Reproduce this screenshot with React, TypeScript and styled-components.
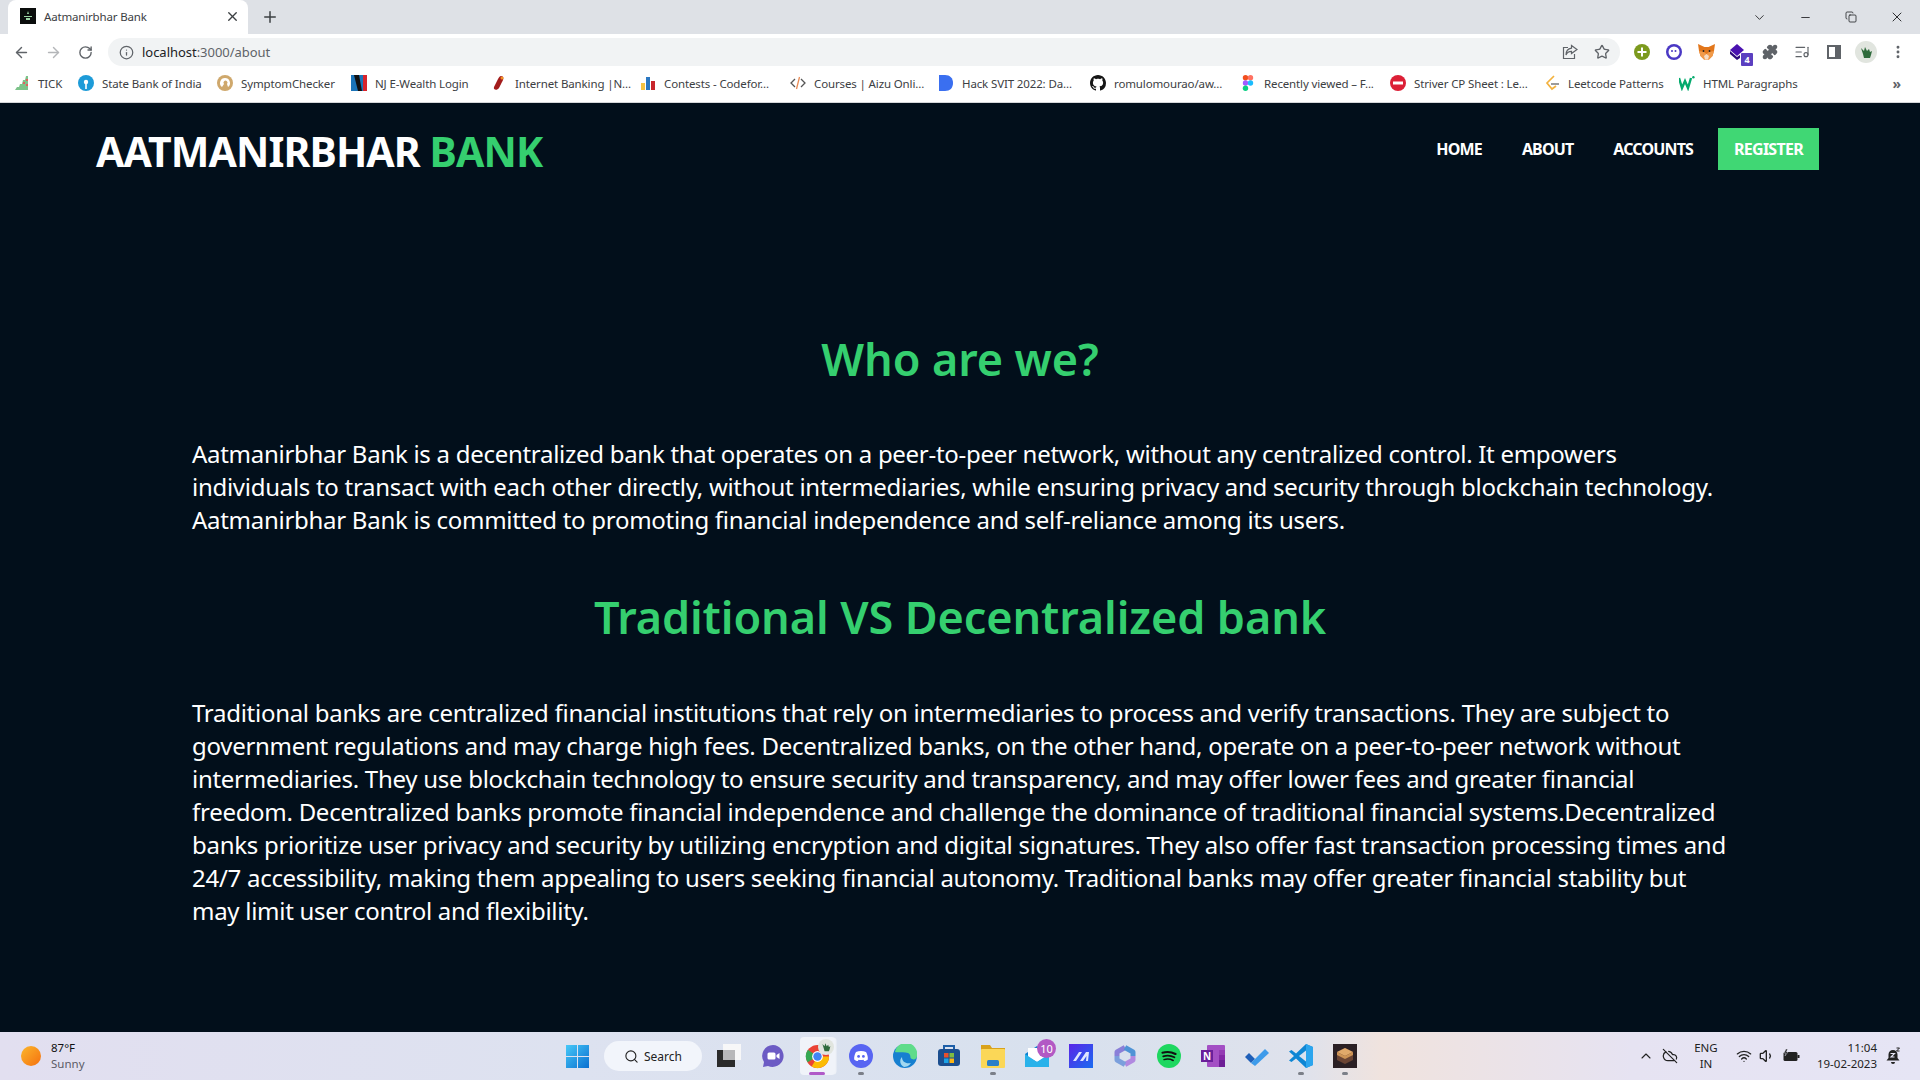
import React from 'react';
import styled, { createGlobalStyle } from 'styled-components';
import { ArrowLeft, ArrowRight, RotateCw, Info, Star, X, Plus, ChevronDown, Minus, Copy, Puzzle, ListMusic, MoreVertical, Search as SearchIcon, ChevronUp, CloudOff, Wifi, Volume1 } from 'lucide-react';

const Global = createGlobalStyle`
  html, body { margin: 0; padding: 0; width: 1920px; height: 1080px; overflow: hidden; background: #020f1b; }
  * { box-sizing: border-box; }
  #root { width: 1920px; height: 1080px; }
`;
const UI = `"Noto Sans", "Open Sans", sans-serif`;

const Screen = styled.div`display:flex;flex-direction:column;width:1920px;height:1080px;font-family:${UI};`;
const TabStrip = styled.div`display:flex;align-items:flex-end;height:34px;background:#dee1e6;padding-left:8px;flex:none;`;
const Tab = styled.div`display:flex;align-items:center;width:240px;height:34px;background:#fff;border-radius:8px 8px 0 0;padding:0 8px 2px 12px;gap:8px;`;
const Favicon = styled.span`display:flex;align-items:center;justify-content:center;width:16px;height:16px;background:#0a0d0c;flex:none;`;
const TabTitle = styled.span`flex:1;font-size:11.5px;color:#3c4043;letter-spacing:-0.17px;white-space:nowrap;`;
const NewTab = styled.span`display:flex;margin-left:13px;align-self:center;color:#3c4043;`;
const WindowControls = styled.div`display:flex;align-items:center;margin-left:auto;align-self:stretch;color:#202124;`;
const WinBtn = styled.span`display:flex;align-items:center;justify-content:center;width:46px;height:28px;`;

const Toolbar = styled.div`display:flex;align-items:center;height:32px;background:#fff;flex:none;padding:4px 5px 0 5px;`;
const NavBtn = styled.span<{ $dim?: boolean }>`display:flex;align-items:center;justify-content:center;width:32px;height:28px;color:${p => (p.$dim ? '#b4b6b9' : '#5f6368')};`;
const Omnibox = styled.div`display:flex;align-items:center;height:28px;width:1512px;margin-left:7px;background:#f1f3f4;border-radius:14px;padding:0 10px 0 11px;`;
const OmniText = styled.span`margin-left:8px;font-size:13px;color:#202124;letter-spacing:-0.03px;`;
const OmniDim = styled.span`color:#5f6368;`;
const OmniEnd = styled.span`display:flex;gap:16px;margin-left:auto;color:#5f6368;`;
const Ext = styled.span`position:relative;display:flex;align-items:center;justify-content:center;width:32px;height:28px;color:#5f6368;`;
const ExtGroup = styled.div`display:flex;margin-left:6px;`;
const Badge = styled.span`position:absolute;right:1px;bottom:0;width:12px;height:13px;background:#5b3fc0;color:#fff;font-size:9px;font-weight:700;line-height:13px;text-align:center;border-radius:1px;`;

const Bookmarks = styled.div`display:flex;align-items:center;height:37px;background:#fff;border-bottom:1px solid #d5d7da;flex:none;padding:0 0 2px 14px;gap:16px;`;
const Bookmark = styled.div<{ $w: number }>`display:flex;align-items:center;gap:8px;width:${p => p.$w}px;flex:none;`;
const BookIcon = styled.span`display:flex;width:16px;height:16px;flex:none;`;
const BookText = styled.span`font-size:11.5px;letter-spacing:-0.13px;color:#3c4043;white-space:nowrap;`;
const More = styled.span`margin-left:auto;margin-right:19px;font-size:14px;font-weight:700;color:#5f6368;`;

const Page = styled.main`flex:1;background:#020f1b;color:#fff;display:flex;flex-direction:column;min-height:0;`;
const Header = styled.header`display:flex;align-items:flex-start;justify-content:space-between;padding:25px 101px 0 96px;`;
const Logo = styled.div`font-size:41px;font-weight:700;line-height:46px;color:#fff;letter-spacing:-0.9px;`;
const LogoAccent = styled.span`color:#35cf6f;`;
const Menu = styled.nav`display:flex;align-items:center;gap:40px;height:42px;`;
const MenuLink = styled.a`font-size:16px;font-weight:700;color:#fff;letter-spacing:-0.85px;`;
const RegisterBtn = styled.a`display:flex;align-items:center;justify-content:center;width:101px;height:42px;margin-left:-15px;background:#40d774;color:#fff;font-size:16px;font-weight:700;letter-spacing:-0.75px;`;
const Content = styled.section`display:flex;flex-direction:column;padding:0 192px;`;
const Heading = styled.h1<{ $top: number }>`margin:${p => p.$top}px 0 0;text-align:center;font-size:45px;line-height:60px;font-weight:600;color:#35cf6f;letter-spacing:-0.1px;`;
const Para = styled.p<{ $top: number }>`margin:${p => p.$top}px 0 0;font-size:24px;line-height:33px;color:#fff;letter-spacing:-0.28px;white-space:nowrap;`;

const Taskbar = styled.footer`display:grid;grid-template-columns:555px 1fr auto;align-items:center;height:48px;flex:none;background:linear-gradient(90deg,#e2dff0 0%,#dde2f0 30%,#d8e1ee 55%,#dfe2ec 68%,#f0e3de 72%,#e6e3f2 85%,#e6e5f5 100%);`;
const Weather = styled.div`display:flex;align-items:center;gap:10px;padding-left:21px;`;
const Sun = styled.span`width:20px;height:20px;border-radius:50%;background:linear-gradient(135deg,#fbb72c,#f5700f);`;
const WeatherText = styled.div`display:flex;flex-direction:column;font-size:11.5px;line-height:16px;color:#111;`;
const WeatherSub = styled.span`color:#5b5b66;`;
const Apps = styled.div`display:flex;align-items:center;`;
const AppSlot = styled.span<{ $active?: boolean }>`position:relative;display:flex;align-items:center;justify-content:center;width:44px;height:44px;flex:none;
  ${p => p.$active ? `&::before{content:"";position:absolute;left:5px;top:3px;width:35px;height:38px;background:#f0f3f9;border-radius:4px;box-shadow:2px 0 0 -0.5px #eef1f7;}
  & > svg{position:relative;}` : ''}`;
const RunDot = styled.span<{ $active?: boolean }>`position:absolute;bottom:3px;left:50%;transform:translateX(-50%);height:3px;border-radius:2px;width:${p => (p.$active ? 16 : 6)}px;background:${p => (p.$active ? '#b05ac8' : '#7b7f88')};`;
const SearchBox = styled.div`display:flex;align-items:center;justify-content:center;gap:5px;width:98px;height:30px;margin:0 5px;border-radius:15px;background:#f2f5fb;font-size:12px;color:#222;`;
const MailCount = styled.span`position:absolute;right:3px;top:5px;width:19px;height:19px;border-radius:50%;background:#b259c4;color:#fff;font-size:11px;line-height:19px;text-align:center;`;
const Tray = styled.div`display:flex;align-items:center;color:#222;padding-right:19px;`;
const TrayCloud = styled.span`display:flex;margin-left:8px;`;
const TrayLang = styled.div`display:flex;flex-direction:column;align-items:center;width:44px;margin:0 8px 0 6px;font-size:11.5px;line-height:16px;`;
const TrayIcons = styled.div`display:flex;align-items:center;gap:7px;`;
const Clock = styled.div`display:flex;flex-direction:column;align-items:flex-end;margin:0 8px 0 17px;font-size:11.5px;line-height:16px;`;

const bookmarks: { w: number; label: string; icon: React.ReactNode }[] = [
  { w: 48, label: 'TICK', icon: <svg viewBox="0 0 16 16"><path d="M1 15l2-3h2l1-3h2l1-4h2l1-4h2v14z" fill="#7dc38a" /><path d="M9 7h2v2H9zM12 4h2v2h-2zM12 9h2v2h-2z" fill="#e0605f" /></svg> },
  { w: 123, label: 'State Bank of India', icon: <svg viewBox="0 0 16 16"><circle cx="8" cy="8" r="8" fill="#1d9bd8" /><circle cx="8" cy="7" r="2.2" fill="#fff" /><rect x="7.2" y="8" width="1.6" height="6" fill="#fff" /></svg> },
  { w: 118, label: 'SymptomChecker', icon: <svg viewBox="0 0 16 16"><circle cx="8" cy="8" r="8" fill="#cfa86c" /><path d="M8 3a5 5 0 0 0-3 9l2-3a2 2 0 1 1 3 0l1 3a5 5 0 0 0-3-9z" fill="#fff" /></svg> },
  { w: 124, label: 'NJ E-Wealth Login', icon: <svg viewBox="0 0 16 16"><rect width="16" height="16" fill="#1b74b8" /><path d="M3 0h5l3 16H7z" fill="#111" /><rect x="12" y="0" width="4" height="16" fill="#d8242c" /></svg> },
  { w: 133, label: 'Internet Banking |N...', icon: <svg viewBox="0 0 16 16"><path d="M10 1c3 0 3 3 1 6l-3 6c-2 3-6 2-5-1l4-8c1-2 2-3 3-3z" fill="#a31c1c" /><circle cx="11" cy="3" r="1.5" fill="#f29222" /></svg> },
  { w: 134, label: 'Contests - Codefor...', icon: <svg viewBox="0 0 16 16"><rect x="1" y="8" width="4" height="7" fill="#f6c342" /><rect x="6" y="2" width="4" height="13" fill="#2b78c2" /><rect x="11" y="6" width="4" height="9" fill="#c8262c" /></svg> },
  { w: 132, label: 'Courses | Aizu Onli...', icon: <svg viewBox="0 0 16 16" fill="none" strokeWidth="1.3"><path d="M5 4L1 8l4 4" stroke="#555" /><path d="M11 4l4 4-4 4" stroke="#555" /><path d="M9.5 2L6.5 14" stroke="#e98a54" /></svg> },
  { w: 136, label: 'Hack SVIT 2022: Da...', icon: <svg viewBox="0 0 16 16"><path d="M1 0h6c5 0 8 3 8 8s-3 8-8 8H1z" fill="#3a6ff0" /></svg> },
  { w: 134, label: 'romulomourao/aw...', icon: <svg viewBox="0 0 16 16"><path fill="#161616" d="M8 0C3.58 0 0 3.58 0 8c0 3.54 2.29 6.53 5.47 7.59.4.07.55-.17.55-.38 0-.19-.01-.82-.01-1.49-2.01.37-2.53-.49-2.69-.94-.09-.23-.48-.94-.82-1.13-.28-.15-.68-.52-.01-.53.63-.01 1.08.58 1.23.82.72 1.21 1.87.87 2.33.66.07-.52.28-.87.51-1.07-1.78-.2-3.64-.89-3.64-3.95 0-.87.31-1.59.82-2.15-.08-.2-.36-1.02.08-2.12 0 0 .67-.21 2.2.82.64-.18 1.32-.27 2-.27s1.36.09 2 .27c1.53-1.04 2.2-.82 2.2-.82.44 1.1.16 1.92.08 2.12.51.56.82 1.27.82 2.15 0 3.07-1.87 3.75-3.65 3.95.29.25.54.73.54 1.48 0 1.07-.01 1.93-.01 2.2 0 .21.15.46.55.38A8.01 8.01 0 0 0 16 8c0-4.42-3.58-8-8-8z" /></svg> },
  { w: 134, label: 'Recently viewed – F...', icon: <svg viewBox="0 0 16 16"><circle cx="5.5" cy="2.7" r="2.7" fill="#f24e1e" /><circle cx="10.5" cy="2.7" r="2.7" fill="#ff7262" /><circle cx="5.5" cy="8" r="2.7" fill="#a259ff" /><circle cx="10.5" cy="8" r="2.7" fill="#1abcfe" /><circle cx="5.5" cy="13.3" r="2.7" fill="#0acf83" /></svg> },
  { w: 138, label: 'Striver CP Sheet : Le...', icon: <svg viewBox="0 0 16 16"><circle cx="8" cy="8" r="8" fill="#dc1f36" /><rect x="3" y="6.5" width="10" height="3" fill="#fff" /></svg> },
  { w: 119, label: 'Leetcode Patterns', icon: <svg viewBox="0 0 16 16" fill="none" strokeWidth="1.7"><path d="M10 1L3 8l5 6 4-3" stroke="#f3b23f" /><path d="M7 9h8" stroke="#8a8a8a" /></svg> },
  { w: 117, label: 'HTML Paragraphs', icon: <svg viewBox="0 0 16 16" fill="none"><path d="M0 3l3 10 3-7 3 7 3-10" stroke="#04aa6d" strokeWidth="2.4" /><circle cx="14.4" cy="2.2" r="1.2" fill="#04aa6d" /></svg> },
];

const Windows = () => <svg width="23" height="23" viewBox="0 0 23 23"><defs><linearGradient id="w" x1="0" y1="0" x2="1" y2="1"><stop offset="0" stopColor="#46c8f8" /><stop offset="1" stopColor="#0a6fd0" /></linearGradient></defs><path fill="url(#w)" d="M0 0h11v11H0zM12 0h11v11H12zM0 12h11v11H0zM12 12h11v11H12z" /></svg>;
const TaskView = () => <svg width="24" height="24" viewBox="0 0 24 24"><rect x="6" y="0" width="18" height="16" fill="#f7f7f8" /><rect x="0" y="6" width="18" height="17" fill="#2b2b2b" /><rect x="6" y="6" width="12" height="10" fill="#b8b8ba" /></svg>;
const TeamsChat = () => <svg width="24" height="24" viewBox="0 0 24 24"><path d="M12 1a11 11 0 1 1-5 21l-5 1 1-5A11 11 0 0 1 12 1z" fill="#6c5bc4" /><rect x="6.5" y="8.5" width="8" height="7" rx="1.5" fill="#fff" /><path d="M15.5 11l3-2v6l-3-2z" fill="#fff" /></svg>;
const Chrome = () => <svg width="25" height="25" viewBox="0 0 26 26"><circle cx="13" cy="13" r="12" fill="#ea4335" /><path d="M13 13L2.6 19A12 12 0 0 1 3 6z" fill="#34a853" /><path d="M13 13h12a12 12 0 0 1-18 10.4z" fill="#fbbc04" /><circle cx="13" cy="13" r="5.6" fill="#fff" /><circle cx="13" cy="13" r="4.4" fill="#4285f4" /></svg>;
const Discord = () => <svg width="24" height="24" viewBox="0 0 24 24"><circle cx="12" cy="12" r="12" fill="#5865f2" /><path d="M7 8c3-1.400 7-1.400 10 0 1.400 2.400 2 5 1.800 7.400-1.400 1-2.600 1.500-3.600 1.700l-.8-1.300c-1.600.4-3.200.4-4.800 0l-.8 1.300c-1-.2-2.200-.7-3.600-1.700C5 13 5.600 10.400 7 8z" fill="#fff" /><circle cx="9.600" cy="12.400" r="1.400" fill="#5865f2" /><circle cx="14.400" cy="12.400" r="1.400" fill="#5865f2" /></svg>;
const Edge = () => <svg width="24" height="24" viewBox="0 0 24 24"><circle cx="12" cy="12" r="12" fill="#1780d0" /><path d="M2 8a11 11 0 0 1 22 4c0 3-3 4-5 3-3-1 0-4-4-6-4-1.600-10 0-13-1z" fill="#5fdc8a" /><path d="M9 13c0 5 4 7 9 6-2 3-5 4-7 4-4-2-5-7-2-10z" fill="#c5eef7" opacity=".8" /></svg>;
const Store = () => <svg width="24" height="24" viewBox="0 0 24 24"><path d="M7 5V2h10v3" fill="none" stroke="#1c5ea8" strokeWidth="2" /><rect x="1" y="5" width="22" height="17" rx="3" fill="#1b4e8f" /><rect x="7" y="9" width="4.500" height="4.500" fill="#e8502e" /><rect x="12.500" y="9" width="4.500" height="4.500" fill="#7fbb42" /><rect x="7" y="14.500" width="4.500" height="4.500" fill="#1ba2e6" /><rect x="12.500" y="14.500" width="4.500" height="4.500" fill="#fcb415" /></svg>;
const Folder = () => <svg width="24" height="24" viewBox="0 0 24 24"><path d="M0 1h9l2 3h13v4H0z" fill="#d9a21b" /><rect y="5" width="24" height="19" rx="1" fill="#fbd757" /><rect x="6" y="16" width="12" height="6" rx="1.500" fill="#2a7fc9" /></svg>;
const Mail = () => <svg width="24" height="24" viewBox="0 0 24 24"><path d="M0 10L12 2l12 8v12H0z" fill="#0f7fcf" /><path d="M3 4h18v9l-9 5-9-5z" fill="#fff" /><path d="M0 10l12 8 12-8v13H0z" fill="#29b2ea" /></svg>;
const Maths = () => <svg width="24" height="24" viewBox="0 0 24 24"><defs><linearGradient id="m" x1="0" y1="0" x2="1" y2="1"><stop offset="0" stopColor="#5a25e8" /><stop offset="1" stopColor="#1a6cf0" /></linearGradient></defs><rect width="24" height="24" fill="url(#m)" /><path d="M4 17l6-9h3l-6 9zM11 17l6-9h3l-1 9h-2l.5-5-3.500 5z" fill="#dfe6ff" /></svg>;
const Copilot = () => <svg width="22" height="24" viewBox="0 0 22 24" fill="none" strokeWidth="5" strokeLinejoin="round"><path d="M11 3.500L3 8v4" stroke="#8a7fd8" /><path d="M11 3.500l8 4.500v4" stroke="#4f93d6" /><path d="M19 12v4l-8 4.500" stroke="#b189e0" /><path d="M3 12v4l8 4.500" stroke="#7b9fdc" /></svg>;
const Spotify = () => <svg width="24" height="24" viewBox="0 0 24 24" fill="none" stroke="#111" strokeLinecap="round"><circle cx="12" cy="12" r="12" fill="#1ed760" stroke="none" /><path d="M5.500 8.700c4-1.100 9-.8 13 1.200" strokeWidth="2.200" /><path d="M6.200 12.300c3.500-1 8-.7 11.200 1" strokeWidth="1.800" /><path d="M7 15.600c3-.8 6.500-.5 9.200.9" strokeWidth="1.500" /></svg>;
const OneNote = () => <svg width="24" height="24" viewBox="0 0 24 24"><rect x="6" y="1" width="18" height="22" rx="1" fill="#a34fc4" /><rect x="18" y="6" width="6" height="5" fill="#953cb4" /><rect x="18" y="11" width="6" height="5" fill="#8428a6" /><rect x="18" y="16" width="6" height="7" fill="#6d1f96" /><rect y="6" width="12" height="12" fill="#6a1f9a" /><text x="6" y="15.500" textAnchor="middle" fontSize="10" fontWeight="700" fill="#fff" fontFamily="Noto Sans, sans-serif">N</text></svg>;
const Todo = () => <svg width="24" height="20" viewBox="0 0 24 20"><path d="M0 11l4-4 6 6-4 4z" fill="#1f5fb8" /><path d="M6 17L20 3l4 4L10 20z" fill="#3e9bea" /></svg>;
const VSCode = () => <svg width="24" height="24" viewBox="0 0 24 24"><path d="M17 0l7 3v18l-7 3L7 14.500 2.500 18 0 16.500 5 12 0 7.500 2.500 6 7 9.500z" fill="#0e86d4" /><path d="M17 6.500L10 12l7 5.500z" fill="#d9e2ef" /><path d="M17 0l7 3v18l-7 3z" fill="#2ba5ee" /></svg>;
const Minecraft = () => <svg width="24" height="24" viewBox="0 0 24 24"><rect width="24" height="24" fill="#2b2024" /><path d="M12 4l8 4v8l-8 4-8-4V8z" fill="#6b4433" /><path d="M12 4l8 4-8 4-8-4z" fill="#e1a96a" /><path d="M4 8l8 4 8-4v3l-8 4-8-4z" fill="#cd9355" /></svg>;
const TabIcon = () => <svg width="12" height="12" viewBox="0 0 12 12"><path d="M6 1l1 3H5zM2 6h8v1H2zM4 8h4v2H4z" fill="#9bd6a5" /></svg>;
const ProfilePic = ({ size }: { size: number }) => <svg width={size} height={size} viewBox="0 0 22 22"><circle cx="11" cy="11" r="11" fill="#e1e5df" /><path d="M6 7l3 3 1-4 2 4 2-2 1 3 2-1-1 4-1 3H9l-1-4z" fill="#2f6b3c" /></svg>;
const ShareIcon = () => <svg width="16" height="16" viewBox="0 0 16 16" fill="none" stroke="currentColor" strokeWidth="1.200"><path d="M6 3.500H1.500v11h11V10" /><path d="M9.500 1.500L15 5.500l-5.500 4V7.300C7 7.300 5 8.500 4 11c0-3.800 2-6.300 5.500-6.800z" /></svg>;
const FocusBell = () => <svg width="16" height="18" viewBox="0 0 16 18"><path d="M8 3a4.500 4.500 0 0 0-4.500 4.500V11L1.500 13.500h13L12.500 11V7.500A4.500 4.500 0 0 0 8 3z" fill="#222" /><path d="M6 15h4a2 2 0 0 1-4 0z" fill="#222" /><path d="M5.500 6.500h4L6 10h3.500" fill="none" stroke="#e6e5f5" strokeWidth="1.100" /><path d="M11.500 1h3L11.500 4h3" fill="none" stroke="#222" strokeWidth="1" /></svg>;
const BatteryIcon = () => <svg width="18" height="14" viewBox="0 0 18 14"><rect x="1.500" y="3" width="14" height="9" rx="1.500" fill="#222" /><rect x="15.500" y="6" width="2" height="3" fill="#222" /><path d="M4 0L2 4h2L3 7l3-4H4.500L5.500 0z" fill="#222" stroke="#e6e5f5" strokeWidth=".4" /></svg>;
const Fox = () => <svg width="17" height="16" viewBox="0 0 17 16"><path d="M0 0l6.500 3h4L17 0l-1 7-1.500 5-3.500 3.500H6L2.500 12 1 7z" fill="#e2761b" /><path d="M1 7l5 1 2.500 2L11 8l5-1-1.500 5L11 15.500H6L2.500 12z" fill="#f09a4a" /><path d="M6 12l2.500-2 2.500 2-1 3.500H7z" fill="#f6dcc4" /><circle cx="5.500" cy="7" r=".9" fill="#222" /><circle cx="11.500" cy="7" r=".9" fill="#222" /></svg>;

const apps: { node: React.ReactNode; run?: boolean; active?: boolean; count?: string }[] = [
  { node: <TaskView /> },
  { node: <TeamsChat /> },
  { node: <Chrome />, active: true },
  { node: <Discord />, run: true },
  { node: <Edge /> },
  { node: <Store /> },
  { node: <Folder />, run: true },
  { node: <Mail />, count: '10' },
  { node: <Maths /> },
  { node: <Copilot /> },
  { node: <Spotify /> },
  { node: <OneNote /> },
  { node: <Todo /> },
  { node: <VSCode />, run: true },
  { node: <Minecraft />, run: true },
];

const ChromeBadge = styled.span`position:absolute;right:5px;top:5px;display:flex;`;

export default function App() {
  return (
    <Screen>
      <Global />
      <TabStrip>
        <Tab>
          <Favicon><TabIcon /></Favicon>
          <TabTitle>Aatmanirbhar Bank</TabTitle>
          <X size={15} color="#3c4043" strokeWidth={2.2} />
        </Tab>
        <NewTab><Plus size={18} strokeWidth={2} /></NewTab>
        <WindowControls>
          <WinBtn><ChevronDown size={15} strokeWidth={1.4} /></WinBtn>
          <WinBtn><Minus size={13} strokeWidth={1.6} /></WinBtn>
          <WinBtn><Copy size={12} strokeWidth={1.6} /></WinBtn>
          <WinBtn><X size={16} strokeWidth={1.4} /></WinBtn>
        </WindowControls>
      </TabStrip>
      <Toolbar>
        <NavBtn><ArrowLeft size={17} strokeWidth={2} /></NavBtn>
        <NavBtn $dim><ArrowRight size={17} strokeWidth={2} /></NavBtn>
        <NavBtn><RotateCw size={15} strokeWidth={2.2} /></NavBtn>
        <Omnibox>
          <Info size={15} color="#5f6368" strokeWidth={2} />
          <OmniText>localhost<OmniDim>:3000/about</OmniDim></OmniText>
          <OmniEnd><ShareIcon /><Star size={16} strokeWidth={2} /></OmniEnd>
        </Omnibox>
        <ExtGroup>
          <Ext><svg width="16" height="16" viewBox="0 0 16 16"><circle cx="8" cy="8" r="8" fill="#7c9a1e" /><path d="M7 3.500h2V7h3.500v2H9v3.500H7V9H3.500V7H7z" fill="#fff" /></svg></Ext>
          <Ext><svg width="16" height="16" viewBox="0 0 16 16"><circle cx="8" cy="8" r="8" fill="#4a38c4" /><circle cx="8" cy="8" r="5.500" fill="#fff" /><circle cx="6" cy="7" r="1" fill="#4a38c4" /><circle cx="9.500" cy="7" r="1" fill="#4a38c4" /></svg></Ext>
          <Ext><Fox /></Ext>
          <Ext><svg width="18" height="18" viewBox="0 0 18 18"><path d="M8 1l7 6-7 6-7-6z" fill="#4a12b0" /><path d="M1 8l7 6 3-2v3l-3 2-7-6z" fill="#2d0b7d" /></svg><Badge>4</Badge></Ext>
          <Ext><Puzzle size={16} fill="#5f6368" /></Ext>
          <Ext><ListMusic size={16} strokeWidth={1.7} /></Ext>
          <Ext><svg width="14" height="14" viewBox="0 0 14 14"><rect x="1" y="1" width="12" height="12" fill="none" stroke="#5f6368" strokeWidth="2" /><rect x="8" y="1" width="5" height="12" fill="#5f6368" /></svg></Ext>
          <Ext><ProfilePic size={22} /></Ext>
          <Ext><MoreVertical size={16} strokeWidth={2.4} /></Ext>
        </ExtGroup>
      </Toolbar>
      <Bookmarks>
        {bookmarks.map(b => (
          <Bookmark key={b.label} $w={b.w}>
            <BookIcon>{b.icon}</BookIcon>
            <BookText>{b.label}</BookText>
          </Bookmark>
        ))}
        <More>»</More>
      </Bookmarks>
      <Page>
        <Header>
          <Logo>AATMANIRBHAR <LogoAccent>BANK</LogoAccent></Logo>
          <Menu>
            <MenuLink>HOME</MenuLink>
            <MenuLink>ABOUT</MenuLink>
            <MenuLink>ACCOUNTS</MenuLink>
            <RegisterBtn>REGISTER</RegisterBtn>
          </Menu>
        </Header>
        <Content>
          <Heading $top={155}>Who are we?</Heading>
          <Para $top={48}>
            Aatmanirbhar Bank is a decentralized bank that operates on a peer-to-peer network, without any centralized control. It empowers<br />
            individuals to transact with each other directly, without intermediaries, while ensuring privacy and security through blockchain technology.<br />
            Aatmanirbhar Bank is committed to promoting financial independence and self-reliance among its users.
          </Para>
          <Heading $top={51}>Traditional VS Decentralized bank</Heading>
          <Para $top={49}>
            Traditional banks are centralized financial institutions that rely on intermediaries to process and verify transactions. They are subject to<br />
            government regulations and may charge high fees. Decentralized banks, on the other hand, operate on a peer-to-peer network without<br />
            intermediaries. They use blockchain technology to ensure security and transparency, and may offer lower fees and greater financial<br />
            freedom. Decentralized banks promote financial independence and challenge the dominance of traditional financial systems.Decentralized<br />
            banks prioritize user privacy and security by utilizing encryption and digital signatures. They also offer fast transaction processing times and<br />
            24/7 accessibility, making them appealing to users seeking financial autonomy. Traditional banks may offer greater financial stability but<br />
            may limit user control and flexibility.
          </Para>
        </Content>
      </Page>
      <Taskbar>
        <Weather>
          <Sun />
          <WeatherText>87°F<WeatherSub>Sunny</WeatherSub></WeatherText>
        </Weather>
        <Apps>
          <AppSlot><Windows /></AppSlot>
          <SearchBox><SearchIcon size={15} strokeWidth={1.8} />Search</SearchBox>
          {apps.map((a, i) => (
            <AppSlot key={i} $active={a.active}>
              {a.node}
              {a.active && <ChromeBadge><ProfilePic size={16} /></ChromeBadge>}
              {(a.run || a.active) && <RunDot $active={a.active} />}
              {a.count && <MailCount>{a.count}</MailCount>}
            </AppSlot>
          ))}
        </Apps>
        <Tray>
          <ChevronUp size={16} strokeWidth={1.6} />
          <TrayCloud><CloudOff size={16} strokeWidth={1.8} /></TrayCloud>
          <TrayLang><span>ENG</span><span>IN</span></TrayLang>
          <TrayIcons><Wifi size={16} /><Volume1 size={16} /><BatteryIcon /></TrayIcons>
          <Clock><span>11:04</span><span>19-02-2023</span></Clock>
          <FocusBell />
        </Tray>
      </Taskbar>
    </Screen>
  );
}
